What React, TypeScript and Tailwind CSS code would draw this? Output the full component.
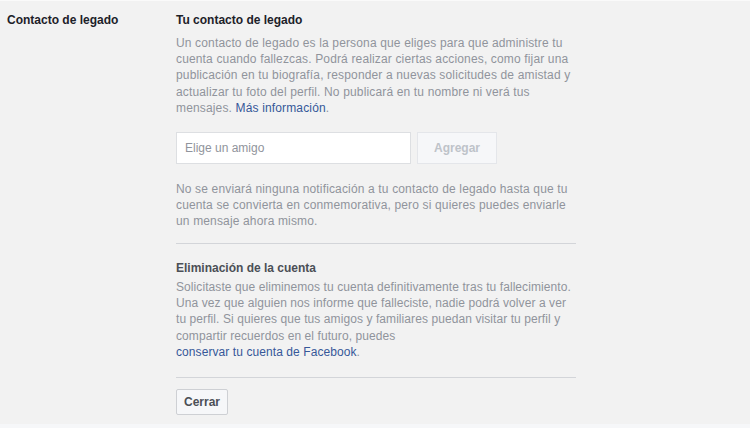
import React from 'react';

const font = { fontFamily: '"Liberation Sans", Arial, sans-serif' };

export default function App() {
    return (
        <div className="w-[750px] h-[428px] bg-[#f6f7f9] text-[12px]" style={font}>
            <div className="h-[424px] bg-[#f2f2f2] border-t border-[#fafafa] flex">
                <div className="w-[176px] pl-[7px] pt-[11px] font-bold text-[#1d2129] leading-[16px]">
                    Contacto de legado
                </div>
                <div className="w-[400px] pt-[11px]">
                    <div className="font-bold text-[#1d2129] leading-[16px]">Tu contacto de legado</div>
                    <p className="mt-[7px] text-[#90949c] leading-[16.2px] tracking-[0.15px]">
                        Un contacto de legado es la persona que eliges para que administre tu cuenta cuando
                        fallezcas. Podrá realizar ciertas acciones, como fijar una publicación en tu biografía,
                        responder a nuevas solicitudes de amistad y actualizar tu foto del perfil. No publicará en
                        tu nombre ni verá tus mensajes. <a className="text-[#365899]">Más información</a>.
                    </p>
                    <div className="mt-[16px] flex gap-[6px]">
                        <input
                            placeholder="Elige un amigo"
                            className="w-[235px] h-[32px] bg-white border border-[#dddfe2] px-[8px] text-[12px] placeholder:text-[#90949c] outline-none"
                            style={font}
                        />
                        <button className="w-[80px] h-[32px] bg-[#f6f7f9] border border-[#e4e6ea] font-bold text-[#bec3c9] text-[12px]">
                            Agregar
                        </button>
                    </div>
                    <p className="mt-[17px] text-[#90949c] leading-[16px] tracking-[0.15px]">
                        No se enviará ninguna notificación a tu contacto de legado hasta que tu cuenta se convierta
                        en conmemorativa, pero si quieres puedes enviarle un mensaje ahora mismo.
                    </p>
                    <div className="mt-[14px] border-t border-[#d3d5d9]" />
                    <div className="mt-[16px] font-bold text-[#4b4f56] leading-[16px]">Eliminación de la cuenta</div>
                    <p className="mt-[3px] text-[#90949c] leading-[16.2px] tracking-[0.08px]">
                        Solicitaste que eliminemos tu cuenta definitivamente tras tu fallecimiento. Una vez que
                        alguien nos informe que falleciste, nadie podrá volver a ver tu perfil. Si quieres que tus
                        amigos y familiares puedan visitar tu perfil y compartir recuerdos en el futuro, puedes
                        <br />
                        <a className="text-[#365899]">conservar tu cuenta de Facebook</a>.
                    </p>
                    <div className="mt-[17px] border-t border-[#d3d5d9]" />
                    <button className="mt-[11px] h-[26px] px-[7px] bg-[#f6f7f9] border border-[#ced0d4] rounded-[2px] font-bold text-[#4b4f56] text-[12px]">
                        Cerrar
                    </button>
                </div>
            </div>
        </div>
    );
}
